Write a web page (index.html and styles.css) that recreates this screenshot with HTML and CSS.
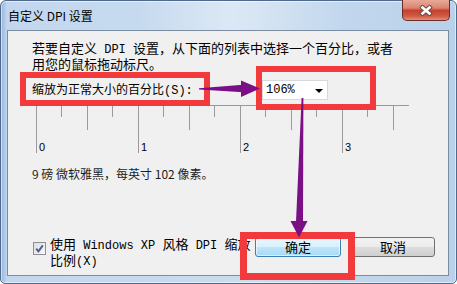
FILE: index.html
```html
<!DOCTYPE html>
<html>
<head>
    <title>自定义 DPI 设置</title>
    <link rel="stylesheet" href="styles.css">
</head>
<body>
    <div class="window">
        <div class="titlebar">
            <div class="title">自定义 DPI 设置</div>
            <div class="close">
                <svg width="14" height="11" viewBox="0 0 14 11">
                    <path d="M3.5 2.5 L10.5 8.5 M10.5 2.5 L3.5 8.5" stroke="#6a4a4a" stroke-width="4.5" stroke-linecap="square" fill="none"/>
                    <path d="M3.5 2.5 L10.5 8.5 M10.5 2.5 L3.5 8.5" stroke="#fff" stroke-width="2.6" stroke-linecap="square" fill="none"/>
                </svg>
            </div>
        </div>
        <div class="client">
            <div class="intro">
                <div>若要自定义<span class="latin"> DPI </span>设置，从下面的列表中选择一个百分比，或者</div>
                <div>用您的鼠标拖动标尺。</div>
            </div>
            <div class="scale-row">
                <div class="scale-label">缩放为正常大小的百分比<span class="latin">(S):</span></div>
                <div class="combo">
                    <span class="combo-value">106%</span>
                    <span class="combo-arrow"></span>
                </div>
            </div>
            <svg class="ruler" width="374" height="48" viewBox="0 0 374 48">
                <g stroke="#9a9a9a" stroke-width="1">
                    <line x1="0" y1="0.5" x2="373" y2="0.5"/>
                    <line x1="0.5" y1="0" x2="0.5" y2="48"/>
                    <line x1="25.5" y1="0" x2="25.5" y2="12"/>
                    <line x1="51.5" y1="0" x2="51.5" y2="25"/>
                    <line x1="76.5" y1="0" x2="76.5" y2="12"/>
                    <line x1="102.5" y1="0" x2="102.5" y2="48"/>
                    <line x1="127.5" y1="0" x2="127.5" y2="12"/>
                    <line x1="153.5" y1="0" x2="153.5" y2="25"/>
                    <line x1="178.5" y1="0" x2="178.5" y2="12"/>
                    <line x1="204.5" y1="0" x2="204.5" y2="48"/>
                    <line x1="229.5" y1="0" x2="229.5" y2="12"/>
                    <line x1="255.5" y1="0" x2="255.5" y2="25"/>
                    <line x1="280.5" y1="0" x2="280.5" y2="12"/>
                    <line x1="306.5" y1="0" x2="306.5" y2="48"/>
                    <line x1="331.5" y1="0" x2="331.5" y2="12"/>
                    <line x1="357.5" y1="0" x2="357.5" y2="25"/>
                </g>
                <g class="ruler-num">
                    <text x="3" y="46">0</text>
                    <text x="105" y="46">1</text>
                    <text x="207" y="46">2</text>
                    <text x="309" y="46">3</text>
                </g>
            </svg>
            <div class="info">9 磅 微软雅黑，每英寸 102 像素。</div>
            <div class="bottom">
                <div class="check">
                    <svg width="11" height="11" viewBox="0 0 11 11">
                        <path d="M2.2 5.6 L4.4 8.4 L8.8 2.4" stroke="#4a5c94" stroke-width="1.9" fill="none"/>
                    </svg>
                </div>
                <div class="check-label">
                    <div>使用<span class="latin"> Windows XP </span>风格<span class="latin"> DPI </span>缩放</div>
                    <div>比例<span class="latin">(X)</span></div>
                </div>
                <div class="buttons">
                    <button class="btn btn-ok">确定</button>
                    <button class="btn btn-cancel">取消</button>
                </div>
            </div>
        </div>
    </div>

    <div class="mark mark-label"></div>
    <div class="mark mark-combo"></div>
    <div class="mark mark-ok"></div>

    <svg class="arrows" width="457" height="284" viewBox="0 0 457 284">
        <polygon points="199,88.2 243,84.8 243,92.2 199,89.6" fill="#7a0f86"/>
        <polygon points="241,80.5 260,88.5 241,97" fill="#7a0f86"/>
        <polygon points="301.6,98 303.4,98 303,222 296,222" fill="#7a0f86"/>
        <polygon points="290.5,221 307.5,221 299,237.5" fill="#7a0f86"/>
    </svg>
</body>
</html>
```

FILE: styles.css
```css
body {
    margin: 0;
    width: 457px;
    height: 284px;
    position: relative;
    overflow: hidden;
    font-family: "Noto Sans CJK SC", sans-serif;
    background-color: #fff;
}
.window {
    box-sizing: border-box;
    width: 457px;
    height: 284px;
    border: 1px solid #4f6a8c;
    border-radius: 6px 6px 5px 5px;
    background: linear-gradient(to right, #94b4dc 0, #c2d7ee 6px, #c9dcf0 55%, #b9d1ea 100%);
    box-shadow: inset 0 0 0 1px rgba(255, 255, 255, 0.55);
    display: flex;
    flex-direction: column;
}
.titlebar {
    height: 29px;
    display: flex;
    align-items: flex-start;
    background: linear-gradient(to right, rgba(255,255,255,0) 30%, rgba(255,255,255,0.35) 50%, rgba(255,255,255,0) 75%);
}
.title {
    margin: 7px 0 0 7px;
    font-size: 12px;
    line-height: 16px;
    color: #000;
}
.close {
    box-sizing: border-box;
    width: 48px;
    height: 21px;
    margin: -1px 6px 0 auto;
    border: 1px solid #6e2c24;
    border-top: none;
    border-radius: 0 0 5px 5px;
    background: linear-gradient(to bottom, #e9aa99 0%, #d98572 40%, #c5412c 52%, #cf5a42 80%, #e2907a 100%);
    display: flex;
    align-items: center;
    justify-content: center;
}
.client {
    box-sizing: border-box;
    height: 246px;
    margin: 0 7px 0 6px;
    border: 1px solid #7b8ca0;
    background-color: #f0f0f0;
    display: flex;
    flex-direction: column;
    color: #000;
}
.latin {
    font-family: "Liberation Mono", monospace;
    font-size: 12px;
}
.intro {
    margin: 10px 0 0 24px;
    font-size: 13px;
    line-height: 13px;
}
.scale-row {
    margin: 10px 0 0 24px;
    height: 20px;
    display: flex;
    align-items: center;
}
.scale-label {
    width: 230px;
    font-size: 12px;
    line-height: 14px;
}
.combo {
    box-sizing: border-box;
    width: 66px;
    height: 20px;
    border: 1px solid #d5d9de;
    background-color: #fff;
    display: flex;
    align-items: center;
    padding-left: 3px;
}
.combo-value {
    font-family: "Liberation Mono", monospace;
    font-size: 12px;
}
.combo-arrow {
    width: 0;
    height: 0;
    margin: 1px 4px 0 auto;
    border-left: 4px solid transparent;
    border-right: 4px solid transparent;
    border-top: 4px solid #000;
}
.ruler {
    display: block;
    margin: 5px 0 0 28px;
}
.ruler-num text {
    font-family: "Liberation Sans", Arial, sans-serif;
    font-size: 11px;
    fill: #000;
}
.info {
    margin: 13px 0 0 24px;
    font-size: 12px;
    line-height: 16px;
    color: #1e1e1e;
}
.bottom {
    margin-top: auto;
    padding: 0 13px 6px 25px;
    display: flex;
    align-items: flex-start;
}
.check {
    box-sizing: border-box;
    width: 13px;
    height: 13px;
    margin-top: 5px;
    border: 1px solid #8e8f8f;
    background: linear-gradient(135deg, #dcdcdc, #fbfbfb);
    display: flex;
    align-items: center;
    justify-content: center;
}
.check-label {
    margin-left: 4px;
    font-size: 13px;
    line-height: 13px;
    white-space: nowrap;
}
.buttons {
    margin-left: auto;
    display: flex;
    gap: 10px;
}
.btn {
    box-sizing: border-box;
    height: 20px;
    padding: 0;
    border: 1px solid #707070;
    border-radius: 3px;
    background: linear-gradient(to bottom, #f2f2f2 0%, #ebebeb 50%, #dddddd 50%, #cfcfcf 100%);
    font-family: "Noto Sans CJK SC", sans-serif;
    font-size: 13px;
    line-height: 16px;
    color: #000;
}
.btn-ok {
    width: 86px;
    border-color: #3c7fb1;
    background: linear-gradient(to bottom, #eaf6fd 0%, #d9f0fc 50%, #bee6fd 50%, #a7d9f5 100%);
    box-shadow: inset 0 0 0 1px rgba(255, 255, 255, 0.6);
}
.btn-cancel {
    width: 84px;
}
.mark {
    position: absolute;
    box-sizing: border-box;
    border: 6px solid #f23a3c;
}
.mark-label {
    left: 20px;
    top: 72px;
    width: 190px;
    height: 34px;
}
.mark-combo {
    left: 256px;
    top: 66px;
    width: 120px;
    height: 44px;
}
.mark-ok {
    left: 240px;
    top: 232px;
    width: 115px;
    height: 48px;
    border-width: 7px;
}
.arrows {
    position: absolute;
    left: 0;
    top: 0;
}
```
